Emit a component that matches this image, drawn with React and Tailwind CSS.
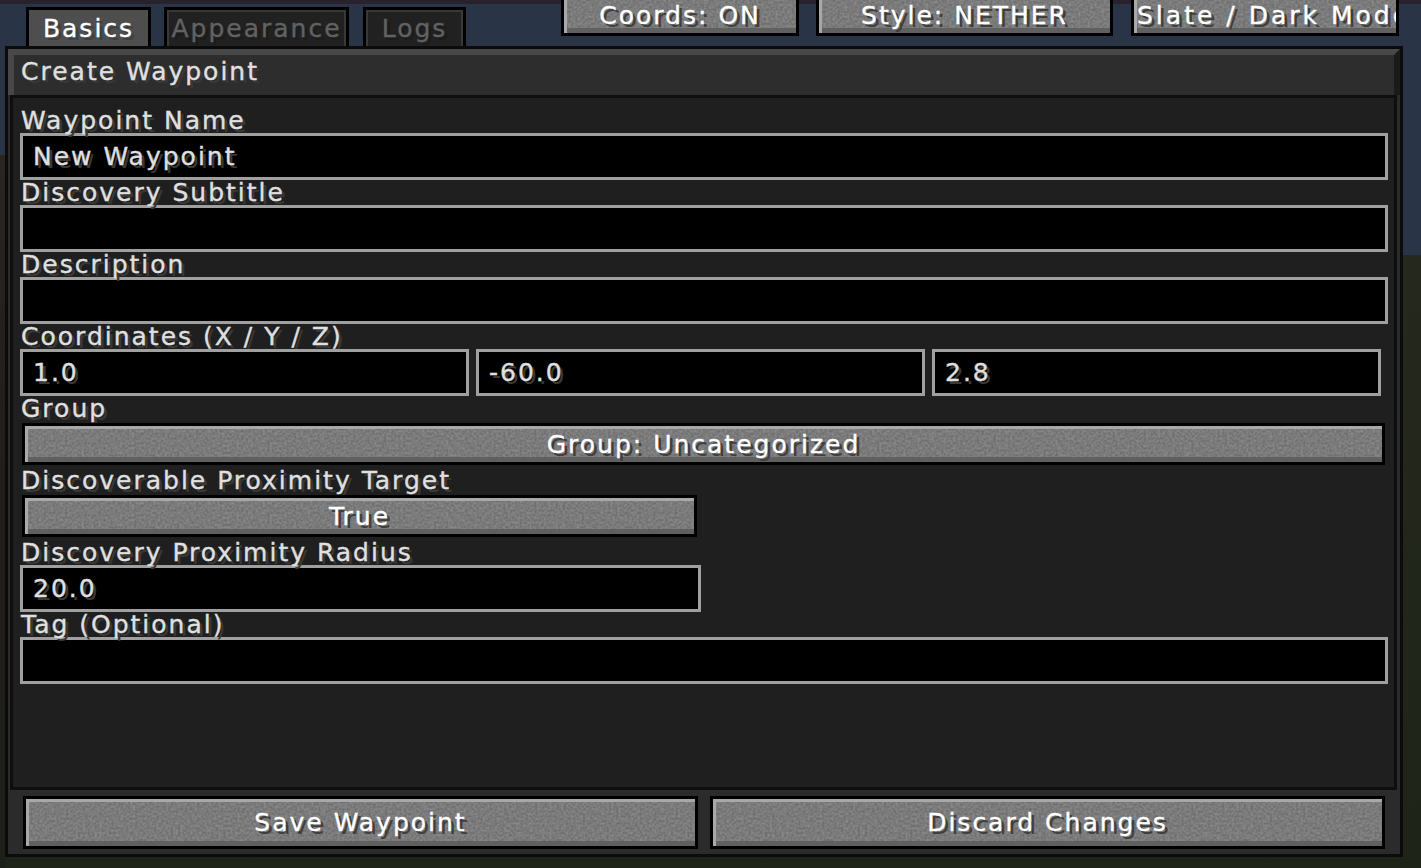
import React from "react";

// Shared SVG filter for the speckled stone texture of the buttons.
function GrainDefs() {
  return (
    <svg aria-hidden="true" className="absolute h-0 w-0">
      <defs>
        <filter id="stone-grain" x="0" y="0" width="100%" height="100%" colorInterpolationFilters="sRGB">
          <feTurbulence type="fractalNoise" baseFrequency="0.42" numOctaves="1" seed="11" />
          <feColorMatrix type="matrix" values="1 0 0 0 0  1 0 0 0 0  1 0 0 0 0  0 0 0 0 1" />
          <feComponentTransfer>
            <feFuncR type="linear" slope="2" intercept="-0.5" />
            <feFuncG type="linear" slope="2" intercept="-0.5" />
            <feFuncB type="linear" slope="2" intercept="-0.5" />
          </feComponentTransfer>
        </filter>
      </defs>
    </svg>
  );
}

function Grain() {
  return (
    <svg aria-hidden="true" className="absolute inset-0 h-full w-full">
      <rect width="100%" height="100%" filter="url(#stone-grain)" opacity="0.1" />
    </svg>
  );
}

function McButton({ className = "", left = false, children }) {
  return (
    <div className={`relative overflow-hidden border-[3px] border-black bg-[#7b7b7b] ${className}`}>
      <Grain />
      <div className="absolute inset-0 shadow-[inset_3px_3px_0_#a8a8a8,inset_0_-5px_0_#606060]" />
      <div
        className={`relative flex h-full items-center whitespace-nowrap text-white [text-shadow:3px_3px_0_#3f3f3f] ${
          left ? "justify-start pl-[3px] tracking-[3px]" : "justify-center"
        }`}
      >
        {children}
      </div>
    </div>
  );
}

function Label({ children }) {
  return (
    <div className="h-[25px] whitespace-nowrap pl-[8px] text-[#e0e0e0] [text-shadow:3px_3px_0_#383838]">
      {children}
    </div>
  );
}

function Field({ value = "", className = "" }) {
  return (
    <div
      className={`flex h-[47px] items-center overflow-hidden whitespace-nowrap border-[3px] border-[#a0a0a0] bg-black pl-[10px] text-[#e0e0e0] [text-shadow:3px_3px_0_#383838] ${className}`}
    >
      {value}
    </div>
  );
}

function Tab({ label, active = false, className = "" }) {
  if (active) {
    return (
      <div
        className={`flex h-[39px] items-center justify-center border-[3px] border-b-0 border-black bg-[#4e4e4e] text-white [text-shadow:3px_3px_0_#3f3f3f] ${className}`}
      >
        {label}
      </div>
    );
  }
  return (
    <div
      className={`flex h-[39px] items-center justify-center overflow-hidden whitespace-nowrap border-[3px] border-b-0 border-black bg-[#212121] text-[#626262] shadow-[inset_2px_2px_0_#383838,inset_-2px_0_0_#383838] [text-shadow:3px_3px_0_#1c1c1c] ${className}`}
    >
      {label}
    </div>
  );
}

export default function App() {
  return (
    <div className="relative h-[868px] w-[1421px] overflow-hidden font-['DejaVu_Sans','Liberation_Sans',sans-serif] text-[25px] leading-[25px] tracking-[2px] [-webkit-text-stroke:0.35px_currentColor] [background:linear-gradient(to_bottom,transparent_155px,#2b2420_155px,#221d1a_520px,#1d2018_100%)_left_top/5px_100%_no-repeat,linear-gradient(to_bottom,#29222d_0px,#29222d_4px,#2a3447_4px,#2a3447_255px,#24281d_255px,#1f2419_100%)]">
      <GrainDefs />

      {/* tab strip and toolbar */}
      <div className="flex h-[46px] items-start">
        <div className="ml-[26px] mt-[7px] flex">
          <Tab label="Basics" active className="w-[125px]" />
          <Tab label="Appearance" className="ml-[13px] w-[185px]" />
          <Tab label="Logs" className="ml-[14px] w-[103px]" />
        </div>
        <div className="ml-[95px] -mt-[6px] flex">
          <McButton className="h-[42px] w-[238px]">Coords: ON</McButton>
          <McButton className="ml-[17px] h-[42px] w-[297px]">Style: NETHER</McButton>
          <McButton left className="ml-[18px] h-[42px] w-[268px]">
            Slate / Dark Mode
          </McButton>
        </div>
      </div>

      {/* editor panel */}
      <div className="ml-[5px] flex h-[811px] w-[1398px] flex-col border-[3px] border-[#0b0b0b] bg-[#2b2b2b]">
        <div className="h-[46px] border-l-[6px] border-r-[6px] border-t-[6px] border-l-[#484848] border-r-[#1b1b1b] border-t-[#484848] bg-[#2d2d2d] pl-[7px] pt-[4px] text-[#e0e0e0] [text-shadow:3px_3px_0_#383838]">
          Create Waypoint
        </div>

        <div className="ml-[2px] h-[695px] w-[1387px] border-[3px] border-[#0e0e0e] bg-[#1f1f1f] pt-[10px]">
          <Label>Waypoint Name</Label>
          <Field value="New Waypoint" className="ml-[7px] w-[1368px]" />

          <Label>Discovery Subtitle</Label>
          <Field className="ml-[7px] w-[1368px]" />

          <Label>Description</Label>
          <Field className="ml-[7px] w-[1368px]" />

          <Label>Coordinates (X / Y / Z)</Label>
          <div className="ml-[7px] flex gap-[7px]">
            <Field value="1.0" className="w-[449px]" />
            <Field value="-60.0" className="w-[449px]" />
            <Field value="2.8" className="w-[449px]" />
          </div>

          <Label>Group</Label>
          <div className="h-[47px] pl-[9px] pt-[2px]">
            <McButton className="h-[42px] w-[1363px]">Group: Uncategorized</McButton>
          </div>

          <Label>Discoverable Proximity Target</Label>
          <div className="h-[47px] pl-[9px] pt-[2px]">
            <McButton className="h-[42px] w-[675px]">True</McButton>
          </div>

          <Label>Discovery Proximity Radius</Label>
          <Field value="20.0" className="ml-[7px] w-[681px]" />

          <Label>Tag (Optional)</Label>
          <Field className="ml-[7px] w-[1368px]" />
        </div>

        <div className="flex h-[64px] gap-[12px] pl-[15px] pt-[6px]">
          <McButton className="h-[53px] w-[675px]">Save Waypoint</McButton>
          <McButton className="h-[53px] w-[675px]">Discard Changes</McButton>
        </div>
      </div>
    </div>
  );
}
